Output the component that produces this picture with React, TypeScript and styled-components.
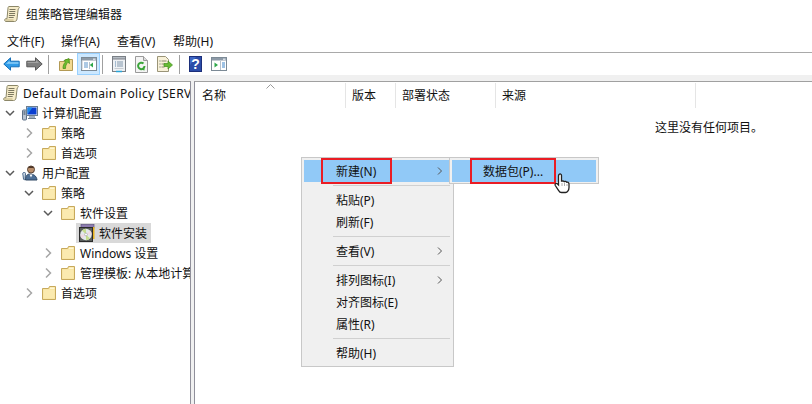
import React from 'react';
import styled, { createGlobalStyle } from 'styled-components';

const GlobalStyle = createGlobalStyle`
    html, body {
        margin: 0;
        padding: 0;
        background: #fff;
    }
    body {
        font-family: "Noto Sans", "Noto Sans CJK SC", sans-serif;
        font-size: 12px;
        color: #111;
    }
`;

const Page = styled.div`
    position: relative;
    width: 812px;
    height: 404px;
    overflow: hidden;
    display: flex;
    flex-direction: column;
`;

const TitleBar = styled.div`
    height: 28px;
    display: flex;
    align-items: center;
    gap: 6px;
    padding: 0 0 2px 4px;
    box-sizing: content-box;
    height: 27px;
`;

const MenuBar = styled.div`
    display: flex;
    align-items: center;
    box-sizing: border-box;
    border-bottom: 1px solid #a9a9a9;
    padding: 0 0 0 7px;
    height: 24px;
`;

const MenuBarItem = styled.span<{ $w: number }>`
    width: ${(p) => p.$w}px;
`;

const Toolbar = styled.div`
    height: 22px;
    display: flex;
    align-items: center;
`;

const ToolButton = styled.div<{ $active?: boolean }>`
    width: 23px;
    height: 22px;
    box-sizing: border-box;
    display: flex;
    align-items: center;
    justify-content: center;
    background: ${(p) => (p.$active ? '#cce8ff' : 'transparent')};
    border: 1px solid ${(p) => (p.$active ? '#99d1ff' : 'transparent')};
`;

const ToolSep = styled.div<{ $left?: number; $right?: number }>`
    width: 1px;
    height: 19px;
    background: #a0a0a0;
    margin: 0 ${(p) => p.$right ?? 4}px 0 ${(p) => p.$left ?? 2}px;
`;

const Band = styled.div`
    height: 6px;
    background: #f0f0f0;
`;

const Panes = styled.div`
    flex: 1;
    display: flex;
    min-height: 0;
    background: #f0f0f0;
`;

const TreePane = styled.div`
    width: 191px;
    box-sizing: border-box;
    background: #fff;
    border-top: 1px solid #a0a0a0;
    border-right: 1px solid #8f8f9a;
    padding-top: 1px;
    overflow: hidden;
`;

const TreeRow = styled.div<{ $depth: number }>`
    height: 20px;
    display: flex;
    align-items: center;
    white-space: nowrap;
    padding-left: ${(p) => (p.$depth === 0 ? 3 : 4 + 19 * (p.$depth - 1))}px;
`;

const ChevronBox = styled.span`
    width: 12px;
    height: 16px;
    margin-right: 6px;
    flex: none;
    display: flex;
    align-items: center;
    justify-content: center;
`;

const TreeLabel = styled.span<{ $selected?: boolean }>`
    display: flex;
    align-items: center;
    height: 20px;
    gap: 4px;
    padding-right: 4px;
    margin-left: ${(p) => (p.$selected ? '-3px' : '0')};
    padding-left: ${(p) => (p.$selected ? '3px' : '0')};
    background: ${(p) => (p.$selected ? '#d9d9d9' : 'transparent')};
`;

const RootText = styled.span`
    letter-spacing: 0.33px;
`;

const ListPane = styled.div`
    flex: 1;
    margin-left: 3px;
    background: #fff;
    border-top: 1px solid #a0a0a0;
    border-left: 1px solid #8f8f9a;
    display: flex;
    flex-direction: column;
`;

const ListHeader = styled.div`
    display: flex;
    height: 25px;
    margin-top: 1px;
`;

const HeaderCell = styled.div<{ $w: number; $first?: boolean }>`
    position: relative;
    width: ${(p) => p.$w}px;
    box-sizing: border-box;
    border-right: 1px solid #e5e5e5;
    padding-left: ${(p) => (p.$first ? 7 : 6)}px;
    line-height: 25px;
`;

const SortMark = styled.svg`
    position: absolute;
    left: 71px;
    top: 1px;
`;

const EmptyNote = styled.div`
    padding: 10px 0 0 460px;
`;

const ContextMenu = styled.div`
    position: absolute;
    left: 301px;
    top: 157px;
    width: 153px;
    height: 210px;
    box-sizing: border-box;
    background: #f0f0f0;
    border: 1px solid #c8c8c8;
    padding: 2px;
`;

const SubMenu = styled.div`
    position: absolute;
    left: 147px;
    top: -1px;
    width: 150px;
    height: 27px;
    box-sizing: border-box;
    background: #f0f0f0;
    border: 1px solid #c8c8c8;
    padding: 2px;
`;

const MenuRow = styled.div<{ $hot?: boolean; $indent?: number }>`
    position: relative;
    height: 22px;
    display: flex;
    align-items: center;
    padding-left: ${(p) => p.$indent ?? 32}px;
    background: ${(p) => (p.$hot ? '#91c9f7' : 'transparent')};
`;

const MenuArrow = styled.svg`
    position: absolute;
    right: 8px;
    top: 7px;
`;

const MenuSep = styled.div`
    height: 1px;
    margin: 3px 1px 3px 29px;
    background: #d0d0d0;
`;

const RedBox = styled.div<{ $left: number; $w: number }>`
    position: absolute;
    left: ${(p) => p.$left}px;
    top: -2px;
    width: ${(p) => p.$w}px;
    height: 26px;
    box-sizing: border-box;
    border: 2px solid #ea1c24;
`;

const HandCursor = styled.svg`
    position: absolute;
    left: 554px;
    top: 173px;
`;

const IconBox = styled.svg`
    flex: none;
    display: block;
`;

const ScrollIcon = () => (
    <IconBox width="16" height="16" viewBox="0 0 16 16">
        <path d="M5 .5h9.500c1 0 1.200 1.800-.3 2.500L13 13c-.2 1.500-1 2.500-2.500 2.500H2c-1.500 0-2-2.500-.2-2.800H3L4 2c.1-1 .4-1.500 1-1.500z" fill="#f6ecc9" stroke="#8c8768" />
        <path d="M5.500 3.500h6M5.300 5.500h6M5.100 7.500h6M4.900 9.500h6M4.700 11.500h5" stroke="#7c7860" />
        <path d="M2 14h7.500" stroke="#c0b27e" />
    </IconBox>
);

const FolderIcon = () => (
    <IconBox width="16" height="16" viewBox="0 0 16 16">
        <path d="M1.500 3.500h6l1-2h6v13h-13z" fill="#f8e29b" stroke="#c7a95c" />
        <path d="M2.500 4.500h11v9h-11z" fill="#fbeaaf" />
        <path d="M9 2.500h4.500v1.500H9z" fill="#fff6d2" />
    </IconBox>
);

const ComputerIcon = () => (
    <IconBox width="16" height="16" viewBox="0 0 16 16">
        <rect x="0.500" y="5" width="4" height="10" rx="1" fill="#b8c4d2" stroke="#5e7186" />
        <path d="M1.500 7h2M1.500 9h2" stroke="#2f4358" />
        <rect x="4.500" y="1.500" width="11" height="9" fill="#e8edf2" stroke="#6d7f8f" />
        <path d="M5.500 2.500h9v7h-9z" fill="#0b3fd0" />
        <path d="M5.500 9.500l5-7h-5z" fill="#1c8ae8" />
        <path d="M7 11h6v2H7z" fill="#9fadbc" />
        <path d="M6 13.500h8" stroke="#6d7f8f" />
    </IconBox>
);

const UserIcon = () => (
    <IconBox width="16" height="16" viewBox="0 0 16 16">
        <path d="M2 7.500c-1.500 0-1.500 1.500-1 2.500l.5 4c.2 1 1.200 1 1.600 0l.4-5.500c0-1-.5-1-1.500-1z" fill="#cfdbe7" stroke="#47678c" />
        <path d="M3.500 15c0-4 1.500-6 4.500-6s6.500 1.500 7 6z" fill="#4d6f96" stroke="#2f4763" />
        <path d="M7.500 9.500l1.500 3 1.500-3z" fill="#fff" />
        <circle cx="9" cy="4.500" r="3.500" fill="#b98e6b" stroke="#5a4334" />
        <path d="M6 3c1-2 5-2.500 6 0z" fill="#4b3527" />
    </IconBox>
);

const DiscIcon = () => (
    <IconBox width="16" height="18" viewBox="0 0 16 18">
        <rect x="2" y="0.500" width="13" height="3.500" fill="#8d7bb0" stroke="#5f5480" strokeWidth="0.700" />
        <rect x="13" y="3" width="2.500" height="12" fill="#e8b320" />
        <rect x="0.500" y="3.500" width="13" height="14" fill="#5a5f5c" stroke="#2b2b2b" />
        <circle cx="7" cy="10.500" r="5.700" fill="#e3e8ea" />
        <path d="M7 10.500L3 6.500a5.700 5.700 0 0 1 4-1.700zM7 10.500l4 4a5.700 5.700 0 0 1-4 1.700z" fill="#c5dc8c" />
        <path d="M7 10.500l4-4a5.700 5.700 0 0 1 1.700 4zM7 10.500l-4 4a5.700 5.700 0 0 1-1.700-4z" fill="#efd9e2" />
        <circle cx="7" cy="10.500" r="1.400" fill="#fff" stroke="#888" strokeWidth="0.500" />
    </IconBox>
);

const Chevron = ({ open }: { open: boolean }) => (
    <IconBox width="12" height="12" viewBox="0 0 12 12">
        {open ? (
            <path d="M2 4l4 4 4-4" fill="none" stroke="#595959" strokeWidth="1.500" />
        ) : (
            <path d="M4 1.500L8.500 6 4 10.500" fill="none" stroke="#a6a6a6" strokeWidth="1.500" />
        )}
    </IconBox>
);

const NavArrow = ({ back }: { back: boolean }) => (
    <IconBox width="17" height="14" viewBox="0 0 17 14">
        {back ? (
            <>
                <path d="M.8 7L7.500.8v3.400h8.700v5.600H7.500v3.400z" fill="#2f9be8" stroke="#1770b8" />
                <path d="M3 7l3.500-3.200v1.400h9v1.500H4.500z" fill="#8fd0f7" />
            </>
        ) : (
            <>
                <path d="M16.200 7L9.500.8v3.400H.8v5.600h8.700v3.400z" fill="#7f7f7f" stroke="#585858" />
                <path d="M1.500 5h8.500V3l3 3H1.500z" fill="#a3a3a3" />
            </>
        )}
    </IconBox>
);

const FolderUpIcon = () => (
    <IconBox width="16" height="16" viewBox="0 0 16 16">
        <path d="M1.500 5.500h5l1-2h7v11h-13z" fill="#f2d991" stroke="#b39a55" />
        <path d="M5 12.500c0-3 .8-5 2.500-6.500L6 4.500 11 2.500l.5 5-1.500-1.200C8 8 7.500 10 7.500 12.500z" fill="#6ebd2c" stroke="#3f8a16" strokeWidth="0.700" />
    </IconBox>
);

const PaneIcon = ({ tree }: { tree: boolean }) => (
    <IconBox width="16" height="14" viewBox="0 0 16 14">
        <rect x="0.500" y="0.500" width="15" height="13" fill="#fff" stroke="#7c8a96" />
        <rect x="1" y="1" width="14" height="2.500" fill="#8d9aa7" />
        <path d="M12 1.500h2.500v1.500H12z" fill="#d5dde4" />
        {tree ? (
            <>
                <path d="M8.500 5v7M1 3.500v9" stroke="#b6c0ca" />
                <path d="M12 5.500v5L8.800 8z" fill="#2fa84a" />
                <path d="M3 6h4M3 8h4M3 10h4" stroke="#5b93c9" />
            </>
        ) : (
            <>
                <path d="M9.500 4v9" stroke="#b6c0ca" />
                <path d="M3.500 5.500v5L7 8z" fill="#2fa84a" />
                <path d="M11 6h3M11 8h3M11 10h3" stroke="#3e86c9" strokeWidth="1.200" />
            </>
        )}
    </IconBox>
);

const PropsIcon = () => (
    <IconBox width="16" height="17" viewBox="0 0 16 17">
        <rect x="1.500" y="0.500" width="13" height="15" fill="#eef1f4" stroke="#7a7f85" />
        <rect x="1.500" y="0.500" width="13" height="2.500" fill="#b5bcc4" stroke="#7a7f85" />
        <path d="M4 6h1M4 8h1M4 10h1" stroke="#5a86ad" />
        <path d="M6 6h6M6 8h6M6 10h6" stroke="#8298ad" />
        <path d="M3.500 12.500h9" stroke="#c6ccd2" />
        <path d="M5 15.500h6" stroke="#29a6d9" strokeWidth="1.500" />
    </IconBox>
);

const RefreshIcon = () => (
    <IconBox width="15" height="17" viewBox="0 0 15 17">
        <path d="M1.500.5h8l4 4v12h-12z" fill="#f4f4f4" stroke="#9a9a9a" />
        <path d="M9.500.5v4h4" fill="#dcdcdc" stroke="#9a9a9a" />
        <path d="M10.500 10a3.200 3.200 0 1 1-1-2.400" fill="none" stroke="#3ba53a" strokeWidth="2" />
        <path d="M7 13.500l3.500 1v-3.500z" fill="#3ba53a" />
    </IconBox>
);

const ExportIcon = () => (
    <IconBox width="17" height="17" viewBox="0 0 17 17">
        <path d="M1.500.5h8l3 3v12h-11z" fill="#f8f1d8" stroke="#9a9478" />
        <path d="M3.500 5h1M3.500 8h1M3.500 11h1" stroke="#566" />
        <path d="M5.500 5h5M5.500 8h3M5.500 11h3" stroke="#8d8a70" />
        <path d="M8 7.500h4V5l4.500 4-4.500 4v-2.500H8z" fill="#67bb34" stroke="#3f8f1c" strokeWidth="0.700" />
    </IconBox>
);

const HelpIcon = () => (
    <IconBox width="13" height="16" viewBox="0 0 13 16">
        <rect x="0" y="0" width="13" height="16" fill="#2b4ca8" />
        <rect x="0.500" y="0.500" width="12" height="15" fill="none" stroke="#1c2f7a" />
        <path d="M1 1h6L1 9z" fill="#3f68c6" />
        <text x="6.500" y="13" fontFamily="'Liberation Sans', sans-serif" fontWeight="700" fontSize="14" fill="#fff" textAnchor="middle">?</text>
    </IconBox>
);

type TreeNode = {
    depth: number;
    label: string;
    chevron?: 'open' | 'closed';
    icon: React.ReactNode;
    selected?: boolean;
};

const treeNodes: TreeNode[] = [
    { depth: 1, label: '计算机配置', chevron: 'open', icon: <ComputerIcon /> },
    { depth: 2, label: '策略', chevron: 'closed', icon: <FolderIcon /> },
    { depth: 2, label: '首选项', chevron: 'closed', icon: <FolderIcon /> },
    { depth: 1, label: '用户配置', chevron: 'open', icon: <UserIcon /> },
    { depth: 2, label: '策略', chevron: 'open', icon: <FolderIcon /> },
    { depth: 3, label: '软件设置', chevron: 'open', icon: <FolderIcon /> },
    { depth: 4, label: '软件安装', icon: <DiscIcon />, selected: true },
    { depth: 3, label: 'Windows 设置', chevron: 'closed', icon: <FolderIcon /> },
    { depth: 3, label: '管理模板: 从本地计算', chevron: 'closed', icon: <FolderIcon /> },
    { depth: 2, label: '首选项', chevron: 'closed', icon: <FolderIcon /> },
];

const columns = [
    { label: '名称', width: 151 },
    { label: '版本', width: 50 },
    { label: '部署状态', width: 100 },
    { label: '来源', width: 200 },
];

const menuArrow = (
    <MenuArrow width="6" height="8" viewBox="0 0 6 8">
        <path d="M1 .5L4.500 4 1 7.500" fill="none" stroke="#555" />
    </MenuArrow>
);

const App: React.FC = () => {
    return (
        <Page>
            <GlobalStyle />
            <TitleBar>
                <ScrollIcon />
                <span>组策略管理编辑器</span>
            </TitleBar>
            <MenuBar>
                <MenuBarItem $w={54}>文件(F)</MenuBarItem>
                <MenuBarItem $w={56}>操作(A)</MenuBarItem>
                <MenuBarItem $w={56}>查看(V)</MenuBarItem>
                <MenuBarItem $w={60}>帮助(H)</MenuBarItem>
            </MenuBar>
            <Toolbar>
                <ToolButton><NavArrow back /></ToolButton>
                <ToolButton><NavArrow back={false} /></ToolButton>
                <ToolSep $right={5} />
                <ToolButton><FolderUpIcon /></ToolButton>
                <ToolButton $active><PaneIcon tree /></ToolButton>
                <ToolSep />
                <ToolButton><PropsIcon /></ToolButton>
                <ToolButton><RefreshIcon /></ToolButton>
                <ToolButton><ExportIcon /></ToolButton>
                <ToolSep $left={3} />
                <ToolButton><HelpIcon /></ToolButton>
                <ToolButton><PaneIcon tree={false} /></ToolButton>
            </Toolbar>
            <Band />
            <Panes>
                <TreePane>
                    <TreeRow $depth={0}>
                        <TreeLabel>
                            <ScrollIcon />
                            <RootText>Default Domain Policy [SERV</RootText>
                        </TreeLabel>
                    </TreeRow>
                    {treeNodes.map((node, index) => (
                        <TreeRow key={index} $depth={node.depth}>
                            <ChevronBox>
                                {node.chevron && <Chevron open={node.chevron === 'open'} />}
                            </ChevronBox>
                            <TreeLabel $selected={node.selected}>
                                {node.icon}
                                <span>{node.label}</span>
                            </TreeLabel>
                        </TreeRow>
                    ))}
                </TreePane>
                <ListPane>
                    <ListHeader>
                        {columns.map((column, index) => (
                            <HeaderCell key={column.label} $w={column.width} $first={index === 0}>
                                {column.label}
                                {index === 0 && (
                                    <SortMark width="9" height="5" viewBox="0 0 9 5">
                                        <path d="M.5 4.500L4.500.5l4 4" fill="none" stroke="#9a9a9a" />
                                    </SortMark>
                                )}
                            </HeaderCell>
                        ))}
                    </ListHeader>
                    <EmptyNote>这里没有任何项目。</EmptyNote>
                </ListPane>
            </Panes>
            <ContextMenu>
                <MenuRow $hot>
                    新建(N)
                    {menuArrow}
                    <RedBox $left={17} $w={71} />
                </MenuRow>
                <MenuSep />
                <MenuRow>粘贴(P)</MenuRow>
                <MenuRow>刷新(F)</MenuRow>
                <MenuSep />
                <MenuRow>查看(V){menuArrow}</MenuRow>
                <MenuSep />
                <MenuRow>排列图标(I){menuArrow}</MenuRow>
                <MenuRow>对齐图标(E)</MenuRow>
                <MenuRow>属性(R)</MenuRow>
                <MenuSep />
                <MenuRow>帮助(H)</MenuRow>
                <SubMenu>
                    <MenuRow $hot $indent={31}>
                        数据包(P)...
                        <RedBox $left={18} $w={86} />
                    </MenuRow>
                </SubMenu>
            </ContextMenu>
            <HandCursor width="17" height="21" viewBox="0 0 17 21">
                <path d="M5 1.500c1-1 2.500-.5 2.500 1V8l1-.2c1 0 1.500.2 1.800.8 1-.5 2-.2 2.300.6 1-.3 2.400.2 2.400 1.800v3.500c0 2.500-1.500 5-3.500 5H7.500c-1.500 0-2.300-1-3-2.200L1.300 12.500c-.8-1.500.8-2.800 2-1.700l1.200 1.200V3c0-.6.200-1.100.5-1.500z" fill="#fff" stroke="#222" strokeWidth="1.300" />
                <path d="M8 10v3M10.500 10v3M13 11v2" stroke="#999" strokeWidth="0.800" />
            </HandCursor>
        </Page>
    );
};

export default App;
